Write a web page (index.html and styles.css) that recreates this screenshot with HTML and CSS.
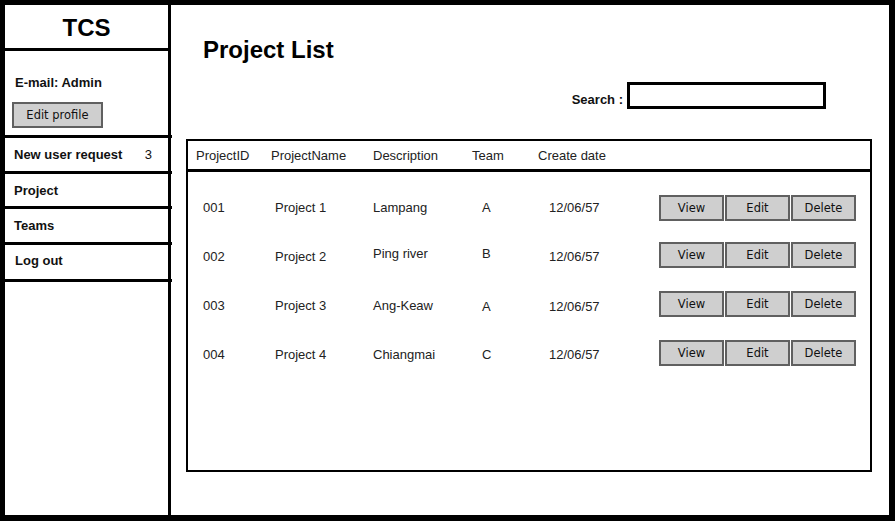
FILE: index.html
```html
<!DOCTYPE html>
<html>
<head>
<meta charset="utf-8">
<link rel="stylesheet" href="styles.css">
</head>
<body>
<div class="frame">
  <aside class="sidebar">
    <div class="brand">TCS</div>
    <div class="profile">
      <div class="email">E-mail: Admin</div>
      <button class="sketch-btn profile-btn">Edit profile</button>
    </div>
    <div class="nav-item h33"><span>New user request</span><span class="count">3</span></div>
    <div class="nav-item h32">Project</div>
    <div class="nav-item h33">Teams</div>
    <div class="nav-item h34 logout">Log out</div>
  </aside>
  <main class="main">
    <h1 class="title">Project List</h1>
    <div class="search-row">
      <label class="search-label">Search :</label>
      <div class="search-box"></div>
    </div>
    <div class="table">
      <div class="thead">
        <span>ProjectID</span><span>ProjectName</span><span>Description</span><span>Team</span><span>Create date</span>
      </div>
      <div class="tbody">
        <div class="trow">
          <span>001</span><span>Project 1</span><span>Lampang</span><span>A</span><span>12/06/57</span>
          <div class="actions"><button class="sketch-btn">View</button><button class="sketch-btn">Edit</button><button class="sketch-btn">Delete</button></div>
        </div>
        <div class="trow">
          <span>002</span><span>Project 2</span><span class="raised">Ping river</span><span class="raised">B</span><span>12/06/57</span>
          <div class="actions up2"><button class="sketch-btn">View</button><button class="sketch-btn">Edit</button><button class="sketch-btn">Delete</button></div>
        </div>
        <div class="trow">
          <span>003</span><span>Project 3</span><span>Ang-Keaw</span><span class="lowered">A</span><span class="lowered">12/06/57</span>
          <div class="actions up2"><button class="sketch-btn">View</button><button class="sketch-btn">Edit</button><button class="sketch-btn">Delete</button></div>
        </div>
        <div class="trow">
          <span>004</span><span>Project 4</span><span>Chiangmai</span><span>C</span><span>12/06/57</span>
          <div class="actions up2"><button class="sketch-btn">View</button><button class="sketch-btn">Edit</button><button class="sketch-btn">Delete</button></div>
        </div>
      </div>
    </div>
  </main>
</div>
</body>
</html>
```

FILE: styles.css
```css
* { box-sizing: border-box; }
html, body { margin: 0; padding: 0; background: #fff; }
body { font-family: "Liberation Sans", Arial, sans-serif; color: #111; }

.frame {
  width: 895px;
  height: 521px;
  border-style: solid;
  border-color: #000;
  border-width: 5px 6px 6px 5px;
  display: flex;
  background: #fff;
}

.sidebar {
  width: 166px;
  border-right: 3px solid #000;
  display: flex;
  flex-direction: column;
}

.brand {
  height: 46px;
  border-bottom: 3px solid #000;
  font-weight: bold;
  font-size: 24px;
  text-align: center;
  line-height: 45px;
  color: #000;
}

.profile {
  height: 87px;
  border-bottom: 3px solid #000;
  padding: 24px 0 0 7px;
  margin-right: -4px;
}

.email {
  font-size: 13px;
  font-weight: bold;
  line-height: 15px;
  padding-left: 3px;
}

.sketch-btn {
  font-family: "DejaVu Sans", sans-serif;
  font-size: 11.5px;
  color: #111;
  background: #cfcfcf;
  border: 2px solid #606060;
  padding: 0;
  margin: 0;
  height: 26px;
  width: 65px;
}

.profile-btn {
  margin-top: 12px;
  width: 91px;
}

.nav-item {
  border-bottom: 3px solid #000;
  margin-right: -4px;
  padding: 0 20px 0 9px;
  display: flex;
  align-items: center;
  justify-content: space-between;
  font-size: 13px;
  font-weight: bold;
}
.h33 { height: 36px; }
.h32 { height: 35px; }
.h34 { height: 37px; }
.logout { padding-left: 10px; padding-bottom: 3px; }
.count { font-weight: normal; }

.main {
  flex: 1;
  display: flex;
  flex-direction: column;
  padding: 31px 17px 0 15px;
}

.title {
  margin: 0 0 0 17px;
  font-size: 24px;
  line-height: 27px;
  font-weight: bold;
  color: #000;
}

.search-row {
  display: flex;
  justify-content: flex-end;
  align-items: flex-end;
  margin: 19px 46px 0 0;
  gap: 4px;
}
.search-label {
  font-size: 13px;
  font-weight: bold;
  line-height: 15px;
  padding-bottom: 2px;
}
.search-box {
  width: 199px;
  height: 27px;
  border: 3px solid #000;
}

.table {
  margin-top: 30px;
  height: 333px;
  border: 2px solid #000;
  font-size: 13px;
  color: #222;
}

.thead {
  height: 31px;
  border-bottom: 3px solid #000;
  display: grid;
  grid-template-columns: 75px 102px 99px 66px auto;
  align-items: center;
  padding-left: 8px;
}

.tbody { padding-top: 11px; }

.trow {
  height: 49px;
  display: grid;
  grid-template-columns: 72px 98px 109px 67px 110px auto;
  align-items: center;
  padding-left: 15px;
}

.raised { margin-bottom: 6px; }
.lowered { margin-top: 2px; }

.actions {
  display: flex;
  gap: 1px;
}
.up2 { margin-bottom: 3px; }
```
